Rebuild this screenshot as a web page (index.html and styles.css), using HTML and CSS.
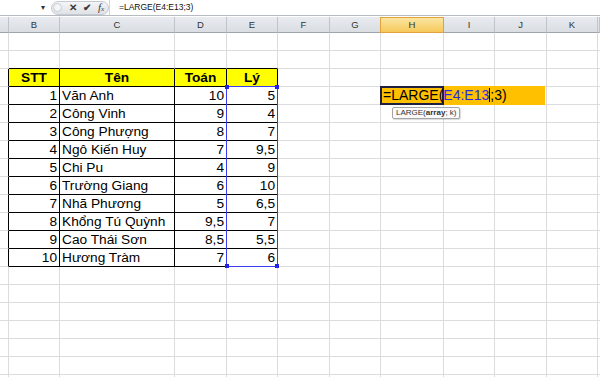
FILE: index.html
```html
<!DOCTYPE html>
<html lang="vi">
<head>
    <meta charset="UTF-8">
    <meta name="viewport" content="width=device-width, initial-scale=1.0">
    <title>LARGE - Excel</title>
    <link rel="stylesheet" href="styles.css">
</head>
<body>

    <div class="formula-bar">
        <div class="name-box"><span class="drop">&#9662;</span></div>
        <div class="fx-buttons">
            <span class="expand"></span>
            <span class="btn">&#10005;</span>
            <span class="btn">&#10004;</span>
            <span class="btn fx">f<small>x</small></span>
        </div>
        <div class="formula-text">=LARGE(E4:E13;3)</div>
    </div>

    <div class="col-heads">
        <div class="ch"></div><div class="ch">B</div><div class="ch">C</div><div class="ch">D</div>
        <div class="ch">E</div><div class="ch">F</div><div class="ch">G</div><div class="ch active">H</div>
        <div class="ch">I</div><div class="ch">J</div><div class="ch">K</div><div class="ch"></div>
    </div>

    <div class="sheet">
        <!-- row 1 -->
        <div class="c"></div><div class="c"></div><div class="c"></div><div class="c"></div><div class="c"></div><div class="c"></div><div class="c"></div><div class="c"></div><div class="c"></div><div class="c"></div><div class="c"></div><div class="c"></div>
        <!-- row 2 -->
        <div class="c"></div><div class="c tt"></div><div class="c tt"></div><div class="c tt"></div><div class="c tt"></div><div class="c"></div><div class="c"></div><div class="c"></div><div class="c"></div><div class="c"></div><div class="c"></div><div class="c"></div>
        <!-- row 3: headers -->
        <div class="c tl"></div><div class="c t hd">STT</div><div class="c t hd">Tên</div><div class="c t hd">Toán</div><div class="c t hd">Lý</div><div class="c"></div><div class="c"></div><div class="c"></div><div class="c"></div><div class="c"></div><div class="c"></div><div class="c"></div>
        <!-- rows 4-13 -->
        <div class="c tl"></div><div class="c t n">1</div><div class="c t">Văn Anh</div><div class="c t n">10</div><div class="c t n">5</div><div class="c"></div><div class="c"></div><div class="c"></div><div class="c"></div><div class="c"></div><div class="c"></div><div class="c"></div>
        <div class="c tl"></div><div class="c t n">2</div><div class="c t">Công Vinh</div><div class="c t n">9</div><div class="c t n">4</div><div class="c"></div><div class="c"></div><div class="c"></div><div class="c"></div><div class="c"></div><div class="c"></div><div class="c"></div>
        <div class="c tl"></div><div class="c t n">3</div><div class="c t">Công Phượng</div><div class="c t n">8</div><div class="c t n">7</div><div class="c"></div><div class="c"></div><div class="c"></div><div class="c"></div><div class="c"></div><div class="c"></div><div class="c"></div>
        <div class="c tl"></div><div class="c t n">4</div><div class="c t">Ngô Kiến Huy</div><div class="c t n">7</div><div class="c t n">9,5</div><div class="c"></div><div class="c"></div><div class="c"></div><div class="c"></div><div class="c"></div><div class="c"></div><div class="c"></div>
        <div class="c tl"></div><div class="c t n">5</div><div class="c t">Chi Pu</div><div class="c t n">4</div><div class="c t n">9</div><div class="c"></div><div class="c"></div><div class="c"></div><div class="c"></div><div class="c"></div><div class="c"></div><div class="c"></div>
        <div class="c tl"></div><div class="c t n">6</div><div class="c t">Trường Giang</div><div class="c t n">6</div><div class="c t n">10</div><div class="c"></div><div class="c"></div><div class="c"></div><div class="c"></div><div class="c"></div><div class="c"></div><div class="c"></div>
        <div class="c tl"></div><div class="c t n">7</div><div class="c t">Nhã Phương</div><div class="c t n">5</div><div class="c t n">6,5</div><div class="c"></div><div class="c"></div><div class="c"></div><div class="c"></div><div class="c"></div><div class="c"></div><div class="c"></div>
        <div class="c tl"></div><div class="c t n">8</div><div class="c t">Khổng Tú Quỳnh</div><div class="c t n">9,5</div><div class="c t n">7</div><div class="c"></div><div class="c"></div><div class="c"></div><div class="c"></div><div class="c"></div><div class="c"></div><div class="c"></div>
        <div class="c tl"></div><div class="c t n">9</div><div class="c t">Cao Thái Sơn</div><div class="c t n">8,5</div><div class="c t n">5,5</div><div class="c"></div><div class="c"></div><div class="c"></div><div class="c"></div><div class="c"></div><div class="c"></div><div class="c"></div>
        <div class="c tl"></div><div class="c t n">10</div><div class="c t">Hương Tràm</div><div class="c t n">7</div><div class="c t n">6</div><div class="c"></div><div class="c"></div><div class="c"></div><div class="c"></div><div class="c"></div><div class="c"></div><div class="c"></div>
        <!-- rows 14-20 -->
        <div class="c"></div><div class="c"></div><div class="c"></div><div class="c"></div><div class="c"></div><div class="c"></div><div class="c"></div><div class="c"></div><div class="c"></div><div class="c"></div><div class="c"></div><div class="c"></div>
        <div class="c"></div><div class="c"></div><div class="c"></div><div class="c"></div><div class="c"></div><div class="c"></div><div class="c"></div><div class="c"></div><div class="c"></div><div class="c"></div><div class="c"></div><div class="c"></div>
        <div class="c"></div><div class="c"></div><div class="c"></div><div class="c"></div><div class="c"></div><div class="c"></div><div class="c"></div><div class="c"></div><div class="c"></div><div class="c"></div><div class="c"></div><div class="c"></div>
        <div class="c"></div><div class="c"></div><div class="c"></div><div class="c"></div><div class="c"></div><div class="c"></div><div class="c"></div><div class="c"></div><div class="c"></div><div class="c"></div><div class="c"></div><div class="c"></div>
        <div class="c"></div><div class="c"></div><div class="c"></div><div class="c"></div><div class="c"></div><div class="c"></div><div class="c"></div><div class="c"></div><div class="c"></div><div class="c"></div><div class="c"></div><div class="c"></div>
        <div class="c"></div><div class="c"></div><div class="c"></div><div class="c"></div><div class="c"></div><div class="c"></div><div class="c"></div><div class="c"></div><div class="c"></div><div class="c"></div><div class="c"></div><div class="c"></div>
        <div class="c"></div><div class="c"></div><div class="c"></div><div class="c"></div><div class="c"></div><div class="c"></div><div class="c"></div><div class="c"></div><div class="c"></div><div class="c"></div><div class="c"></div><div class="c"></div>

        <!-- range highlight for E4:E13 while editing -->
        <div class="range">
            <i class="handle tl-h"></i><i class="handle tr-h"></i>
            <i class="handle bl-h"></i><i class="handle br-h"></i>
        </div>

        <!-- in-cell editor in H4 -->
        <div class="editor">
            <div class="active-cell"></div>
            <span class="edit-text">=LARGE(<span class="ref">E4:E13</span><span class="caret"></span>;3)</span>
            <div class="tip">LARGE(<b>array</b>; k)</div>
        </div>
    </div>

</body>
</html>
```

FILE: styles.css
```css
body {
    margin: 0;
    padding: 0;
    width: 600px;
    height: 377px;
    overflow: hidden;
    background-color: #fff;
    font-family: "Liberation Sans", Arial, sans-serif;
}

/* formula bar */

.formula-bar {
    display: flex;
    align-items: center;
    height: 15px;
    border-bottom: 1px solid #b7bcc3;
    margin-bottom: 1px;
}

.name-box {
    width: 48px;
    height: 15px;
    display: flex;
    justify-content: flex-end;
    align-items: center;
    padding-right: 3px;
    box-sizing: border-box;
}

.drop {
    font-size: 8px;
    color: #333;
}

.fx-buttons {
    display: flex;
    align-items: center;
    width: 58px;
    height: 14px;
    margin-left: 3px;
    background: linear-gradient(#f4f5f7, #dfe2e6);
    border: 1px solid #c6cad0;
    border-radius: 8px;
    box-sizing: border-box;
}

.expand {
    width: 9px;
    height: 9px;
    margin: 0 4px 0 1px;
    border: 1px solid #c9cdd2;
    border-radius: 50%;
    background: #f4f5f6;
    box-sizing: border-box;
}

.btn {
    width: 14px;
    text-align: center;
    font-size: 10px;
    font-weight: bold;
    color: #3a3a3a;
    line-height: 12px;
}

.btn.fx {
    font-family: "Liberation Serif", serif;
    font-style: italic;
    font-weight: normal;
    font-size: 11px;
}

.btn.fx small {
    font-size: 7px;
}

.formula-text {
    flex: 1;
    padding-left: 9px;
    font-size: 8.5px;
    color: #111;
    border-left: 1px solid #d3d6da;
    height: 15px;
    line-height: 15px;
}

/* column headers */

.col-heads {
    display: grid;
    grid-template-columns: 9px 51px 115px 52px 51px 52px 51px 63px 51px 52px 51px 1fr;
    height: 16px;
}

.ch {
    box-sizing: border-box;
    border-right: 1px solid #bfc4ca;
    border-bottom: 1px solid #9ea4ab;
    background: linear-gradient(#e8ebef, #dadee3);
    color: #333;
    font-size: 9.5px;
    text-align: center;
    line-height: 15px;
}

.ch.active {
    background: linear-gradient(#fbe6a2, #f6c85a);
    border: 1px solid #e2a13a;
    margin-left: -1px;
    line-height: 14px;
}

/* worksheet grid */

.sheet {
    position: relative;
    display: grid;
    grid-template-columns: 9px 51px 115px 52px 51px 52px 51px 63px 51px 52px 51px 1fr;
    grid-auto-rows: 18px;
}

.c {
    box-sizing: border-box;
    border-right: 1px solid #dadcdd;
    border-bottom: 1px solid #dadcdd;
    padding: 0 2px;
    font-size: 13.7px;
    line-height: 18px;
    white-space: nowrap;
    overflow: hidden;
    color: #000;
}

.c.t {
    border-right-color: #000;
    border-bottom-color: #000;
}

.c.tt {
    border-bottom-color: #000;
}

.c.tl {
    border-right-color: #000;
}

.c.hd {
    background-color: #ffff00;
    font-weight: bold;
    text-align: center;
}

.c.n {
    text-align: right;
}

/* E4:E13 reference highlight */

.range {
    position: absolute;
    left: 226px;
    top: 53px;
    width: 52px;
    height: 181px;
    border: 1px solid #3b3bf2;
    box-sizing: border-box;
    pointer-events: none;
}

.handle {
    position: absolute;
    width: 4px;
    height: 4px;
    background-color: #2424e8;
}

.tl-h { left: -2px; top: -2px; }
.tr-h { right: -2px; top: -2px; }
.bl-h { left: -2px; bottom: -2px; }
.br-h { right: -2px; bottom: -2px; }

/* cell editor */

.editor {
    position: absolute;
    left: 380px;
    top: 53px;
    width: 165px;
    height: 19px;
    background-color: #ffc000;
}

.active-cell {
    position: absolute;
    left: 0;
    top: 0;
    width: 64px;
    height: 19px;
    border: 2px solid #1f2040;
    box-sizing: border-box;
}

.edit-text {
    position: relative;
    display: block;
    padding-left: 3px;
    font-size: 14px;
    line-height: 19px;
    white-space: nowrap;
    color: #000;
}

.ref {
    color: #2a2ae0;
}

.caret {
    display: inline-block;
    width: 1px;
    height: 14px;
    vertical-align: -2px;
    background-color: #000;
}

.tip {
    position: absolute;
    left: 12px;
    top: 21px;
    padding: 0 3px;
    font-size: 8px;
    line-height: 10px;
    color: #333;
    white-space: nowrap;
    background-color: #fafafa;
    border: 1px solid #a5a5a5;
    border-radius: 2px;
    box-shadow: 1px 1px 1px rgba(0, 0, 0, 0.15);
}
```
